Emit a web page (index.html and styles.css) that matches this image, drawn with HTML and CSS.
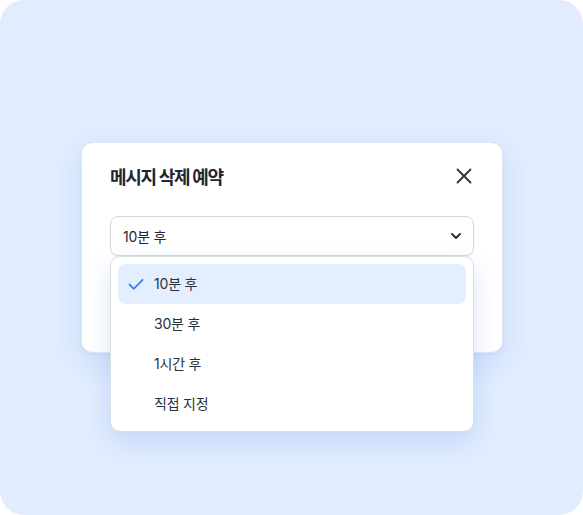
FILE: index.html
```html
<!DOCTYPE html>
<html lang="ko">
<head>
<meta charset="utf-8">
<link rel="stylesheet" href="styles.css">
</head>
<body>
<div class="stage">
  <div class="modal">
    <div class="modal-header">
      <h2 class="modal-title">메시지 삭제 예약</h2>
      <button class="close-btn" aria-label="닫기">
        <svg width="20" height="20" viewBox="0 0 20 20"><path d="M3.5 3.5 L16.5 16.5 M16.5 3.5 L3.5 16.5" stroke="#2b313b" stroke-width="1.8" stroke-linecap="round" fill="none"/></svg>
      </button>
    </div>
    <div class="select-wrap">
      <div class="select">
        <span class="select-value">10분 후</span>
        <svg class="chevron" width="12" height="12" viewBox="0 0 12 12"><path d="M2 4 L6 8 L10 4" stroke="#2b313b" stroke-width="2" stroke-linecap="round" stroke-linejoin="round" fill="none"/></svg>
      </div>
      <ul class="menu">
        <li class="menu-item selected">
          <svg class="check" width="16" height="16" viewBox="0 0 16 16"><path d="M1.5 8.5 L5.8 12.8 L14.5 3.8" stroke="#3b82f6" stroke-width="1.8" stroke-linecap="round" stroke-linejoin="round" fill="none"/></svg>
          <span>10분 후</span>
        </li>
        <li class="menu-item"><span>30분 후</span></li>
        <li class="menu-item"><span>1시간 후</span></li>
        <li class="menu-item"><span>직접 지정</span></li>
      </ul>
    </div>
  </div>
</div>
</body>
</html>
```
FILE: styles.css
```css
* { box-sizing: border-box; }
html, body { margin: 0; padding: 0; background: #ffffff; }
body {
  font-family: "Inter", "Noto Sans CJK KR", sans-serif;
  width: 583px;
  height: 515px;
}
.stage {
  width: 583px;
  height: 515px;
  background: #e1edff;
  border-radius: 24px;
  display: flex;
  justify-content: center;
  align-items: flex-start;
  padding-top: 142px;
  padding-left: 1px;
}
.modal {
  width: 422px;
  height: 211px;
  background: #fff;
  border: 1px solid #e3e8f0;
  border-radius: 12px;
  padding: 19px 28px 0 28px;
  box-shadow: 0 10px 30px rgba(59, 110, 220, 0.14), 0 1px 3px rgba(59, 110, 220, 0.08);
}
.modal-header {
  display: flex;
  align-items: center;
  justify-content: space-between;
  height: 28px;
  margin-bottom: 26px;
}
.modal-title {
  margin: 0;
  font-size: 18px;
  font-weight: 700;
  color: #1f2630;
  letter-spacing: -1.3px;
}
.close-btn {
  border: 0;
  background: none;
  padding: 0;
  width: 20px;
  height: 20px;
  margin-right: 0;
  display: flex;
}
.select-wrap { position: relative; }
.select {
  height: 40px;
  border: 1px solid #d3d7de;
  border-radius: 8px;
  display: flex;
  align-items: center;
  justify-content: space-between;
  padding: 0 11px 0 12px;
  box-shadow: 0 1px 2px rgba(0,0,0,0.04);
}
.select-value {
  font-size: 14px;
  color: #1f2630;
  letter-spacing: -0.2px;
}
.chevron { display: block; }
.menu {
  position: absolute;
  top: 40px;
  left: 0;
  right: 0;
  margin: 0;
  list-style: none;
  padding: 7px;
  height: 176px;
  background: #fff;
  border: 1px solid #d9dde4;
  border-radius: 10px;
  box-shadow: 0 10px 26px rgba(59, 110, 220, 0.18);
}
.menu-item {
  position: relative;
  height: 40px;
  display: flex;
  align-items: center;
  padding-left: 36px;
  padding-bottom: 2px;
  font-size: 14px;
  color: #2b313b;
  border-radius: 8px;
  letter-spacing: -0.2px;
}
.menu-item.selected { background: #e3eeff; }
.check {
  position: absolute;
  left: 10px;
  top: 12px;
}
```
